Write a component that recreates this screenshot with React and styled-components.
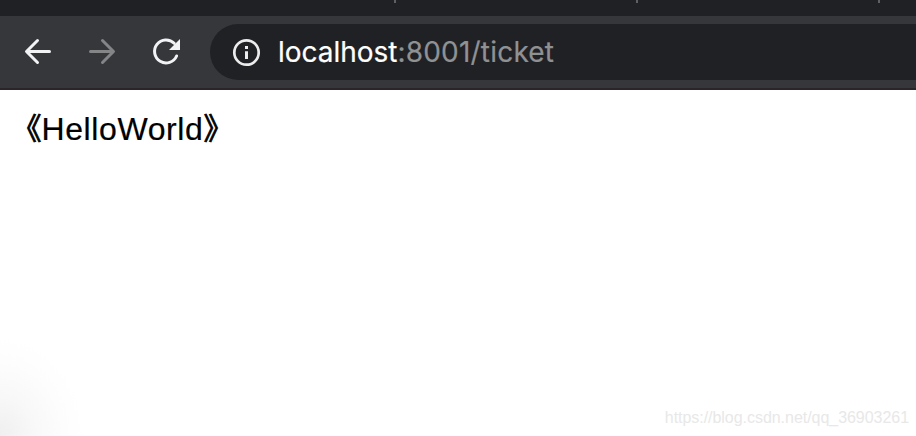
import React from 'react';
import styled, { createGlobalStyle } from 'styled-components';

const GlobalStyle = createGlobalStyle`
  html, body { margin: 0; background: #fff; overflow: hidden; }
  * { box-sizing: border-box; }
`;

const Window = styled.div`
  width: 916px;
  height: 436px;
  display: flex;
  flex-direction: column;
  overflow: hidden;
`;

const TabStrip = styled.div`
  height: 16px;
  flex: none;
  background: #202125;
  display: flex;
  gap: 240px;
  padding-left: 394px;
`;

const TabDivider = styled.span`
  width: 2px;
  height: 3px;
  flex: none;
  background: #5f6064;
`;

const Toolbar = styled.header`
  height: 74px;
  flex: none;
  display: flex;
  align-items: flex-start;
  padding: 8px 0 0 18px;
  background: #36373b;
  border-bottom: 2px solid #2a2528;
`;

const NavButton = styled.button`
  width: 40px;
  height: 56px;
  padding: 0;
  margin-right: 24px;
  flex: none;
  border: 0;
  background: none;
  color: ${(p) => (p.$muted ? '#848587' : '#f1f3f4')};
  svg { display: block; }
`;

const AddressBar = styled.div`
  flex: 1;
  height: 56px;
  display: flex;
  align-items: center;
  padding-left: 22px;
  background: #202125;
  border-radius: 28px 0 0 28px;
  svg { flex: none; }
`;

const Url = styled.span`
  margin-left: 17px;
  font: 400 28px/56px Inter, sans-serif;
  letter-spacing: 0.2px;
  white-space: nowrap;
  color: #909193;
  -webkit-text-stroke: 0.2px currentColor;
`;

const Host = styled.span`
  color: #fff;
  letter-spacing: -0.02px;
`;

const Page = styled.main`
  flex: 1;
  display: flex;
  flex-direction: column;
  justify-content: space-between;
  background: radial-gradient(ellipse 85px 100px at 0 100%, #efefef 0%, #f8f8f8 40%, #fdfdfd 75%, #fff 100%);
`;

const Greeting = styled.div`
  display: flex;
  padding: 16px 0 0 9px;
  font: 400 32px/46px "Liberation Sans", "Noto Sans CJK SC", sans-serif;
  color: #000;
`;

const Word = styled.span`
  letter-spacing: 0.6px;
  -webkit-text-stroke: 0.2px #000;
`;

const Bracket = styled.span`
  width: 32.5px;
  font-size: 30px;
  text-align: ${(p) => (p.$closing ? 'left' : 'right')};
  -webkit-text-stroke: 0.8px #000;
`;

const Watermark = styled.div`
  align-self: flex-end;
  padding-right: 7px;
  font: 400 16px/18px "Liberation Sans", sans-serif;
  letter-spacing: -0.04px;
  margin-bottom: 9px;
  color: #e8e8e8;
`;

function Arrow({ flip }) {
  return (
    <svg width="40" height="56" viewBox="0 0 40 56" fill="none" stroke="currentColor" strokeWidth="3" strokeLinecap="round" strokeLinejoin="round">
      <path d={flip ? 'M8.5 27.5H31M20.5 16.5L31.5 27.5L20.5 38.5' : 'M31.5 27.5H9M19.5 16.5L8.5 27.5L19.5 38.5'} />
    </svg>
  );
}

function Reload() {
  return (
    <svg width="40" height="56" viewBox="0 0 40 56">
      <path d="M28.2 19.3A11.5 11.5 0 1 0 30.6 32" fill="none" stroke="currentColor" strokeWidth="3" strokeLinecap="round" />
      <path d="M34 15V26H23Z" fill="currentColor" />
    </svg>
  );
}

function Info() {
  return (
    <svg width="29" height="29" viewBox="0 0 29 29">
      <circle cx="14.5" cy="14.5" r="12.2" fill="none" stroke="#ececec" strokeWidth="2.7" />
      <path d="M13 13.2H16V21H13ZM13 8H16V11H13Z" fill="#ececec" />
    </svg>
  );
}

export default function App() {
  return (
    <Window>
      <GlobalStyle />
      <TabStrip>
        <TabDivider />
        <TabDivider />
        <TabDivider />
      </TabStrip>
      <Toolbar>
        <NavButton aria-label="Back"><Arrow /></NavButton>
        <NavButton $muted aria-label="Forward"><Arrow flip /></NavButton>
        <NavButton aria-label="Reload"><Reload /></NavButton>
        <AddressBar>
          <Info />
          <Url><Host>localhost</Host>:8001/ticket</Url>
        </AddressBar>
      </Toolbar>
      <Page>
        <Greeting>
          <Bracket>《</Bracket>
          <Word>HelloWorld</Word>
          <Bracket $closing>》</Bracket>
        </Greeting>
        <Watermark>https://blog.csdn.net/qq_36903261</Watermark>
      </Page>
    </Window>
  );
}
